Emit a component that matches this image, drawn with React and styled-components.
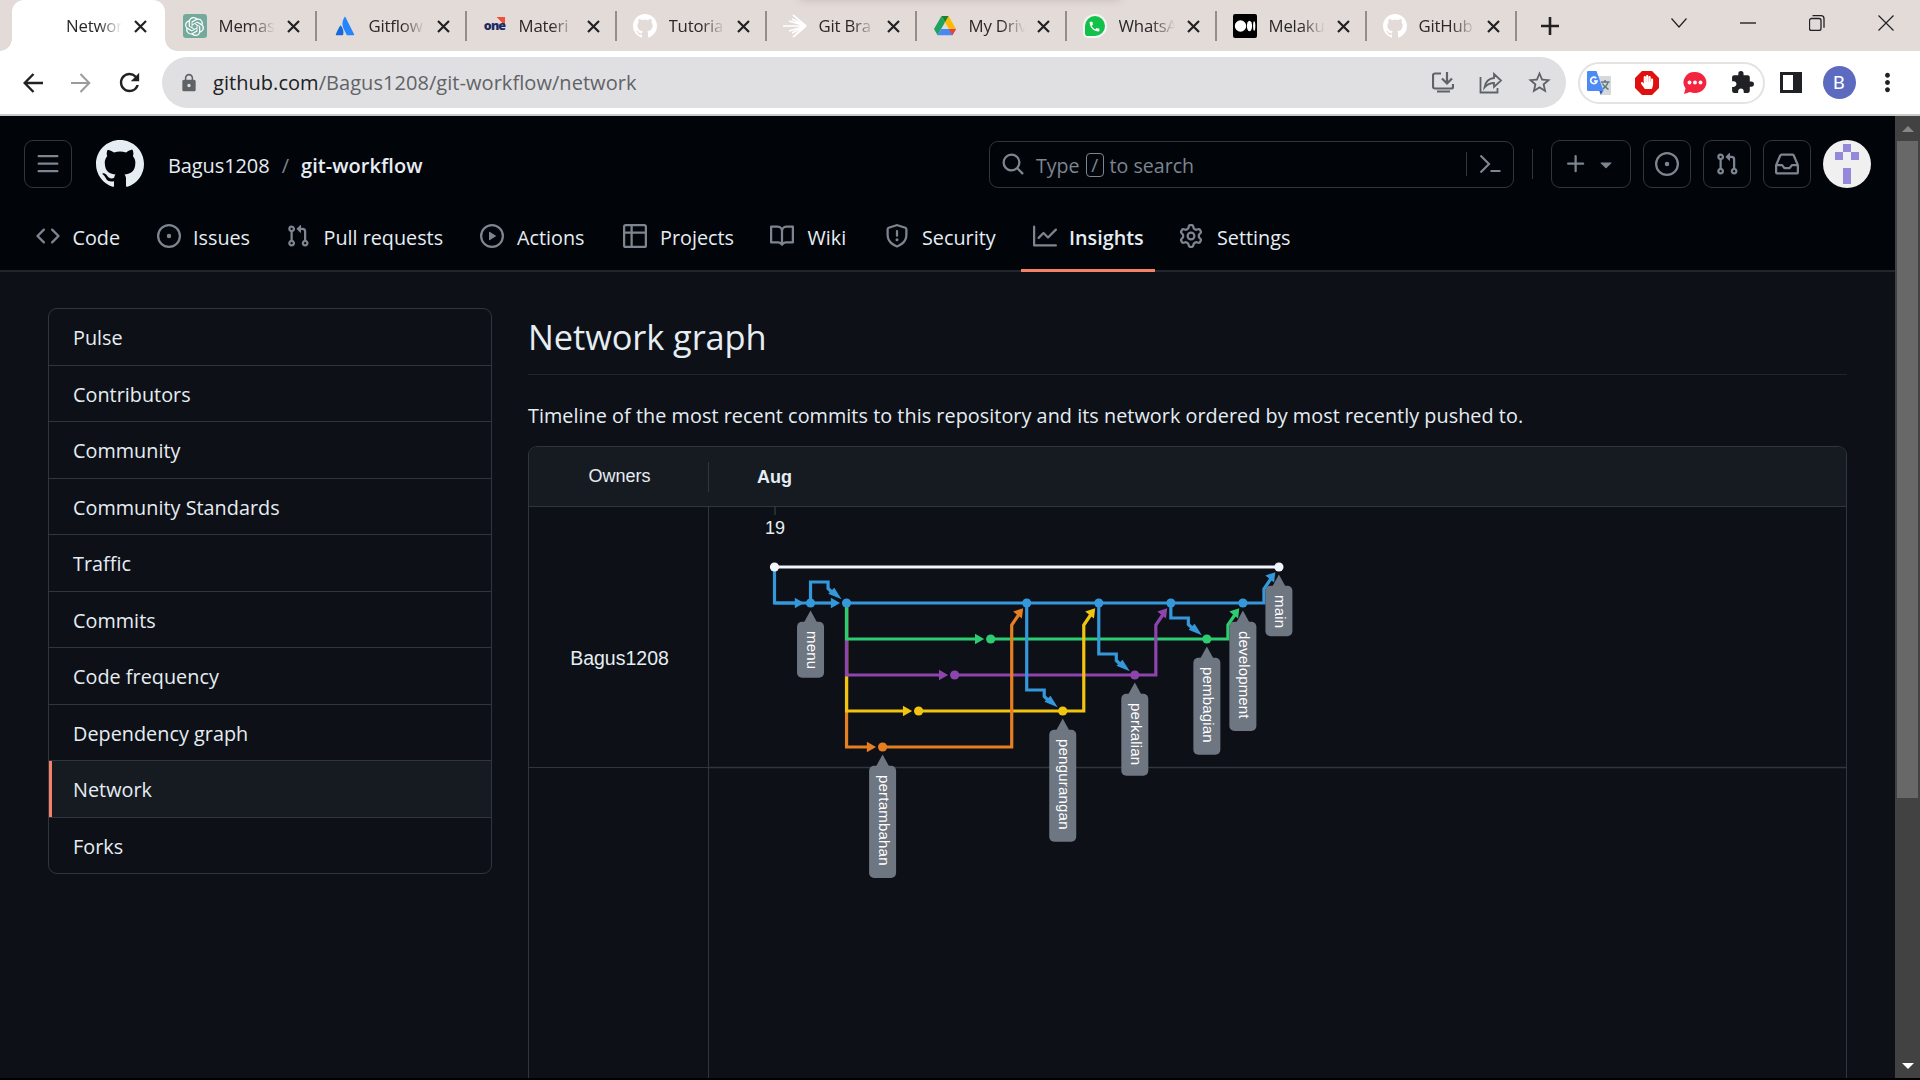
import React from "react";
import styled, { createGlobalStyle, css } from "styled-components";
import { MdRefresh, MdLock, MdStarBorder, MdExtension, MdMoreVert } from "react-icons/md";
import { SiOpenai } from "react-icons/si";
import { FaWhatsapp, FaHandPaper } from "react-icons/fa";

const UI = `"Open Sans", "Noto Sans", sans-serif`;
const ARIAL = `"Liberation Sans", Arial, sans-serif`;

const Global = createGlobalStyle`
  * { box-sizing: border-box; }
  html, body { margin: 0; padding: 0; background: #000; overflow: hidden; }
  svg { display: block; flex: none; }
`;

/* ---------- icons ---------- */

const PATHS = {
  github: "M8 0c4.42 0 8 3.58 8 8a8.013 8.013 0 0 1-5.45 7.59c-.4.08-.55-.17-.55-.38 0-.27.01-1.13.01-2.2 0-.75-.25-1.23-.54-1.48 1.78-.2 3.65-.88 3.65-3.95 0-.88-.31-1.59-.82-2.15.08-.2.36-1.02-.08-2.12 0 0-.67-.22-2.2.82-.64-.18-1.32-.27-2-.27-.68 0-1.36.09-2 .27-1.53-1.03-2.2-.82-2.2-.82-.44 1.1-.16 1.92-.08 2.12-.51.56-.82 1.28-.82 2.15 0 3.06 1.86 3.75 3.64 3.95-.23.2-.44.55-.51 1.07-.46.21-1.61.55-2.33-.66-.15-.24-.6-.83-1.23-.82-.67.01-.27.38.01.53.34.19.73.9.82 1.13.16.45.68 1.31 2.69.94 0 .67.01 1.3.01 1.49 0 .21-.15.45-.55.38A7.995 7.995 0 0 1 0 8c0-4.42 3.58-8 8-8Z",
  code: "m11.28 3.22 4.25 4.25a.75.75 0 0 1 0 1.06l-4.25 4.25a.749.749 0 0 1-1.275-.326.749.749 0 0 1 .215-.734L13.94 8l-3.72-3.72a.749.749 0 0 1 .326-1.275.749.749 0 0 1 .734.215Zm-6.56 0a.751.751 0 0 1 1.042.018.751.751 0 0 1 .018 1.042L2.06 8l3.72 3.72a.749.749 0 0 1-.326 1.275.749.749 0 0 1-.734-.215L.47 8.53a.75.75 0 0 1 0-1.06Z",
  issue: "M8 9.5a1.5 1.5 0 1 0 0-3 1.5 1.5 0 0 0 0 3ZM8 0a8 8 0 1 1 0 16A8 8 0 0 1 8 0ZM1.5 8a6.5 6.5 0 1 0 13 0 6.5 6.5 0 0 0-13 0Z",
  pull: "M1.5 3.25a2.25 2.25 0 1 1 3 2.122v5.256a2.251 2.251 0 1 1-1.5 0V5.372A2.25 2.25 0 0 1 1.5 3.25Zm5.677-.177L9.573.677A.25.25 0 0 1 10 .854V2.5h1A2.5 2.5 0 0 1 13.5 5v5.628a2.251 2.251 0 1 1-1.5 0V5a1 1 0 0 0-1-1h-1v1.646a.25.25 0 0 1-.427.177L7.177 3.427a.25.25 0 0 1 0-.354ZM3.75 2.5a.75.75 0 1 0 0 1.5.75.75 0 0 0 0-1.5Zm0 9.5a.75.75 0 1 0 0 1.5.75.75 0 0 0 0-1.5Zm8.25.75a.75.75 0 1 0 1.5 0 .75.75 0 0 0-1.5 0Z",
  play: "M8 0a8 8 0 1 1 0 16A8 8 0 0 1 8 0ZM1.5 8a6.5 6.5 0 1 0 13 0 6.5 6.5 0 0 0-13 0Zm4.879-2.773 4.264 2.559a.25.25 0 0 1 0 .428l-4.264 2.559A.25.25 0 0 1 6 10.559V5.442a.25.25 0 0 1 .379-.215Z",
  table: "M0 1.75C0 .784.784 0 1.75 0h12.5C15.216 0 16 .784 16 1.75v12.5A1.75 1.75 0 0 1 14.25 16H1.75A1.75 1.75 0 0 1 0 14.25ZM6.5 6.5v8h7.75a.25.25 0 0 0 .25-.25V6.5Zm8-1.5V1.75a.25.25 0 0 0-.25-.25H6.5V5Zm-13 1.5v7.75c0 .138.112.25.25.25H5v-8ZM5 5V1.5H1.75a.25.25 0 0 0-.25.25V5Z",
  book: "M0 1.75A.75.75 0 0 1 .75 1h4.253c1.227 0 2.317.59 3 1.501A3.743 3.743 0 0 1 11.006 1h4.245a.75.75 0 0 1 .75.75v10.5a.75.75 0 0 1-.75.75h-4.507a2.25 2.25 0 0 0-1.591.659l-.622.621a.75.75 0 0 1-1.06 0l-.622-.621A2.25 2.25 0 0 0 5.258 13H.75a.75.75 0 0 1-.75-.75Zm7.251 10.324.004-5.073-.002-2.253A2.25 2.25 0 0 0 5.003 2.5H1.5v9h3.757a3.75 3.75 0 0 1 1.994.574ZM8.755 4.75l-.004 7.322a3.752 3.752 0 0 1 1.992-.572H14.5v-9h-3.495a2.25 2.25 0 0 0-2.25 2.25Z",
  shield: "M7.467.133a1.748 1.748 0 0 1 1.066 0l5.25 1.68A1.75 1.75 0 0 1 15 3.48V7c0 1.566-.32 3.182-1.303 4.682-.983 1.498-2.585 2.813-5.032 3.855a1.697 1.697 0 0 1-1.33 0c-2.447-1.042-4.049-2.357-5.032-3.855C1.32 10.182 1 8.566 1 7V3.48a1.75 1.75 0 0 1 1.217-1.667Zm.61 1.429a.25.25 0 0 0-.153 0l-5.25 1.68a.25.25 0 0 0-.174.238V7c0 1.358.275 2.666 1.057 3.86.784 1.194 2.121 2.34 4.366 3.297a.196.196 0 0 0 .154 0c2.245-.956 3.582-2.104 4.366-3.298C13.225 9.666 13.5 8.36 13.5 7V3.48a.251.251 0 0 0-.174-.237l-5.25-1.68ZM8.75 4.75v3a.75.75 0 0 1-1.5 0v-3a.75.75 0 0 1 1.5 0ZM9 10.5a1 1 0 1 1-2 0 1 1 0 0 1 2 0Z",
  graph: "M1.5 1.75V13.5h13.75a.75.75 0 0 1 0 1.5H.75a.75.75 0 0 1-.75-.75V1.75a.75.75 0 0 1 1.5 0Zm14.28 2.53-5.25 5.25a.75.75 0 0 1-1.06 0L7 7.06 4.28 9.78a.751.751 0 0 1-1.042-.018.751.751 0 0 1-.018-1.042l3.25-3.25a.75.75 0 0 1 1.06 0L10 7.94l4.72-4.72a.751.751 0 0 1 1.042.018.751.751 0 0 1 .018 1.042Z",
  gear: "M8 0a8.2 8.2 0 0 1 .701.031C9.444.095 9.99.645 10.16 1.29l.288 1.107c.018.066.079.158.212.224.231.114.454.243.668.386.123.082.233.09.299.071l1.103-.303c.644-.176 1.392.021 1.82.63.27.385.506.792.704 1.218.315.675.111 1.422-.364 1.891l-.814.806c-.049.048-.098.147-.088.294.016.257.016.515 0 .772-.01.147.038.246.088.294l.814.806c.475.469.679 1.216.364 1.891a7.977 7.977 0 0 1-.704 1.217c-.428.61-1.176.807-1.82.63l-1.102-.302c-.067-.019-.177-.011-.3.071a5.909 5.909 0 0 1-.668.386c-.133.066-.194.158-.211.224l-.29 1.106c-.168.646-.715 1.196-1.458 1.26a8.006 8.006 0 0 1-1.402 0c-.743-.064-1.289-.614-1.458-1.26l-.289-1.106c-.018-.066-.079-.158-.212-.224a5.738 5.738 0 0 1-.668-.386c-.123-.082-.233-.09-.299-.071l-1.103.303c-.644.176-1.392-.021-1.82-.63a8.12 8.12 0 0 1-.704-1.218c-.315-.675-.111-1.422.363-1.891l.815-.806c.05-.048.098-.147.088-.294a6.214 6.214 0 0 1 0-.772c.01-.147-.038-.246-.088-.294l-.815-.806C.635 6.045.431 5.298.746 4.623a7.92 7.92 0 0 1 .704-1.217c.428-.61 1.176-.807 1.82-.63l1.102.302c.067.019.177.011.3-.071.214-.143.437-.272.668-.386.133-.066.194-.158.211-.224l.29-1.106C6.009.645 6.556.095 7.299.03 7.53.01 7.764 0 8 0Zm-.571 1.525c-.036.003-.108.036-.137.146l-.289 1.105c-.147.561-.549.967-.998 1.189-.173.086-.34.183-.5.29-.417.278-.97.423-1.529.27l-1.103-.303c-.109-.03-.175.016-.195.045-.22.312-.412.644-.573.99-.014.031-.021.11.059.19l.815.806c.411.406.562.957.53 1.456a4.709 4.709 0 0 0 0 .582c.032.499-.119 1.05-.53 1.456l-.815.806c-.081.08-.073.159-.059.19.162.346.353.677.573.989.02.03.085.076.195.046l1.102-.303c.56-.153 1.113-.008 1.53.27.161.107.328.204.501.29.447.222.85.629.997 1.189l.289 1.105c.029.109.101.143.137.146a6.6 6.6 0 0 0 1.142 0c.036-.003.108-.036.137-.146l.289-1.105c.147-.561.549-.967.998-1.189.173-.086.34-.183.5-.29.417-.278.97-.423 1.529-.27l1.103.303c.109.029.175-.016.195-.045.22-.313.411-.644.573-.99.014-.031.021-.11-.059-.19l-.815-.806c-.411-.406-.562-.957-.53-1.456a4.709 4.709 0 0 0 0-.582c-.032-.499.119-1.05.53-1.456l.815-.806c.081-.08.073-.159.059-.19a6.464 6.464 0 0 0-.573-.989c-.02-.03-.085-.076-.195-.046l-1.102.303c-.56.153-1.113.008-1.53-.27a4.44 4.44 0 0 0-.501-.29c-.447-.222-.85-.629-.997-1.189l-.289-1.105c-.029-.11-.101-.143-.137-.146a6.6 6.6 0 0 0-1.142 0ZM11 8a3 3 0 1 1-6 0 3 3 0 0 1 6 0ZM9.5 8a1.5 1.5 0 1 0-3.001.001A1.5 1.5 0 0 0 9.5 8Z",
  bars: "M1 2.75A.75.75 0 0 1 1.75 2h12.5a.75.75 0 0 1 0 1.5H1.75A.75.75 0 0 1 1 2.75Zm0 5A.75.75 0 0 1 1.75 7h12.5a.75.75 0 0 1 0 1.5H1.75A.75.75 0 0 1 1 7.75ZM1.75 12h12.5a.75.75 0 0 1 0 1.5H1.75a.75.75 0 0 1 0-1.5Z",
  search: "M10.68 11.74a6 6 0 0 1-7.922-8.982 6 6 0 0 1 8.982 7.922l3.04 3.04a.749.749 0 0 1-.326 1.275.749.749 0 0 1-.734-.215ZM11.5 7a4.499 4.499 0 1 0-8.997 0A4.499 4.499 0 0 0 11.5 7Z",
  plus: "M7.75 2a.75.75 0 0 1 .75.75V7h4.25a.75.75 0 0 1 0 1.5H8.5v4.25a.75.75 0 0 1-1.5 0V8.5H2.75a.75.75 0 0 1 0-1.5H7V2.75A.75.75 0 0 1 7.75 2Z",
  caret: "m4.427 7.427 3.396 3.396a.25.25 0 0 0 .354 0l3.396-3.396A.25.25 0 0 0 11.396 7H4.604a.25.25 0 0 0-.177.427Z",
  inbox: "M2.8 2.06A1.75 1.75 0 0 1 4.41 1h7.18c.7 0 1.333.417 1.61 1.06l2.74 6.395c.04.093.06.194.06.295v4.5A1.75 1.75 0 0 1 14.25 15H1.75A1.75 1.75 0 0 1 0 13.25v-4.5c0-.101.02-.202.06-.295Zm1.61.44a.25.25 0 0 0-.23.152L1.887 8H4.75a.75.75 0 0 1 .6.3L6.625 10h2.75l1.275-1.7a.75.75 0 0 1 .6-.3h2.863L11.82 2.652a.25.25 0 0 0-.23-.152Zm10.09 7h-2.875l-1.275 1.7a.75.75 0 0 1-.6.3h-3.5a.75.75 0 0 1-.6-.3L4.375 9.5H1.5v3.75c0 .138.112.25.25.25h12.5a.25.25 0 0 0 .25-.25Z",
};

const Octicon = ({ name, size = 24, color = "#7d8590" }) => (
  <svg width={size} height={size} viewBox="0 0 16 16" fill={color}>
    <path d={PATHS[name]} />
  </svg>
);

const Stroke = ({ w, h, d, color = "#202124", sw = 2 }) => (
  <svg width={w} height={h} viewBox={`0 0 ${w} ${h}`} fill="none" stroke={color} strokeWidth={sw}>
    <path d={d} />
  </svg>
);

/* ---------- browser chrome ---------- */

const Screen = styled.div`
  width: 1920px;
  height: 1080px;
  display: flex;
  flex-direction: column;
  background: #000;
  font-family: ${UI};
  overflow: hidden;
`;

const TabStrip = styled.div`
  position: relative;
  height: 51px;
  flex: none;
  display: flex;
  background: #e3dbd8;
  padding-left: 12px;
`;

const TopShade = styled.div`
  position: absolute;
  top: -7px;
  left: 800px;
  width: 320px;
  height: 6px;
  box-shadow: 0 0 9px rgba(70, 50, 50, 0.25);
`;

const Tab = styled.div`
  position: relative;
  flex: none;
  display: flex;
  align-items: center;
  width: 150px;
  height: 51px;
  padding: 1px 0 0 16px;
  ${(p) =>
    p.$active &&
    css`
      width: 153px;
      margin-right: 1.5px;
      padding-left: 18px;
      background: #fff;
      border-radius: 12px 12px 0 0;
      &::before,
      &::after {
        content: "";
        position: absolute;
        bottom: 0;
        width: 12px;
        height: 12px;
      }
      &::before {
        left: -12px;
        background: radial-gradient(circle at 0 0, transparent 11.5px, #fff 12px);
      }
      &::after {
        right: -12px;
        background: radial-gradient(circle at 100% 0, transparent 11.5px, #fff 12px);
      }
    `}
`;

const TabIcon = styled.div`
  width: 24px;
  height: 24px;
  display: grid;
  place-items: center;
  margin-right: 12px;
  border-radius: ${(p) => p.$radius || 0}px;
  background: ${(p) => p.$bg || "transparent"};
`;

const TabTitle = styled.div`
  width: 56px;
  overflow: hidden;
  white-space: nowrap;
  font-size: 16.8px;
  line-height: 26px;
  margin-top: -1px;
  letter-spacing: -0.2px;
  color: #2a2727;
  mask-image: linear-gradient(90deg, #000 58%, transparent 100%);
`;

const TabClose = styled.div`
  margin-left: 12px;
`;

const TabRule = styled.div`
  width: 2px;
  height: 30px;
  background: #958d8a;
  margin-left: auto;
  margin-right: -0.5px;
`;

const NewTab = styled.div`
  display: grid;
  place-items: center;
  width: 66px;
`;

const WindowControls = styled.div`
  display: flex;
  align-items: center;
  height: 45px;
  margin-left: auto;
  & > * {
    width: 69px;
    display: grid;
    place-items: center;
  }
`;

const Toolbar = styled.div`
  height: 65px;
  flex: none;
  display: flex;
  align-items: center;
  background: #fff;
  border-bottom: 2px solid #c9cbcb;
  padding: 0 9px;
`;

const ToolButton = styled.div`
  width: 48px;
  display: grid;
  place-items: center;
`;

const AddressBar = styled.div`
  width: 1404px;
  height: 51px;
  margin-left: 9px;
  display: flex;
  align-items: center;
  border-radius: 26px;
  background: #e0e0e2;
  padding: 0 3px 0 17px;
`;

const Url = styled.div`
  flex: 1;
  margin-left: 14px;
  font-size: 20px;
  letter-spacing: 0.05px;
  color: #606367;
  span {
    color: #202124;
  }
`;

const Extensions = styled.div`
  display: flex;
  align-items: center;
  width: 187px;
  height: 42px;
  margin: 0 2px 0 12px;
  padding-right: 2px;
  border: 2px solid #e3e3e4;
  border-radius: 21px;
  justify-content: center;
  & > * {
    width: 48px;
    flex: none;
    display: grid;
    place-items: center;
  }
`;

const Profile = styled.div`
  width: 33px;
  height: 33px;
  border-radius: 50%;
  background: #5c6bc0;
  color: #fff;
  display: grid;
  place-items: center;
  font-family: Roboto, ${UI};
  font-size: 19px;
  line-height: 34px;
`;

/* ---------- page ---------- */

const Viewport = styled.div`
  display: flex;
  height: 962px;
  flex: none;
`;

const Page = styled.div`
  width: 1895px;
  height: 962px;
  overflow: hidden;
  background: #0d1117;
  color: #e6edf3;
`;

const Scrollbar = styled.div`
  width: 25px;
  display: flex;
  flex-direction: column;
  align-items: center;
  background: #424242;
`;

const ScrollArrow = styled.div`
  height: 25px;
  display: grid;
  place-items: center;
`;

const Thumb = styled.div`
  width: 21px;
  height: 657px;
  background: #686868;
  margin-bottom: auto;
`;

const Header = styled.header`
  height: 156px;
  background: #010409;
  border-bottom: 2px solid #21262d;
`;

const HeaderTop = styled.div`
  display: flex;
  align-items: center;
  height: 96px;
  padding: 0 24px;
`;

const IconButton = styled.div`
  width: ${(p) => p.$w || 48}px;
  height: 48px;
  display: flex;
  align-items: center;
  justify-content: center;
  border: 1px solid #30363d;
  border-radius: 9px;
  margin-left: ${(p) => p.$ml ?? 12}px;
  gap: 6px;
`;

const Logo = styled.div`
  margin: 0 24px;
`;

const Crumbs = styled.div`
  display: flex;
  font-size: 20px;
  line-height: 30px;
  padding-top: 3px;
  white-space: pre;
  span {
    width: 32px;
    padding-left: 1px;
    text-align: center;
    color: #7d8590;
  }
  b {
    font-weight: 600;
    letter-spacing: 0.05px;
  }
`;

const Owner = styled.div`
  width: 101px;
  letter-spacing: -0.1px;
`;

const Search = styled.div`
  display: flex;
  align-items: center;
  width: 525px;
  height: 47px;
  margin-left: auto;
  border: 1px solid #30363d;
  border-radius: 9px;
  padding: 0 11px 0 11px;
  font-size: 19.6px;
  color: #7d8590;
`;

const SearchHint = styled.div`
  display: flex;
  align-items: center;
  flex: 1;
  padding-left: 11px;
  padding-top: 2px;
  gap: 6px;
`;

const Slash = styled.span`
  width: 18px;
  height: 24px;
  display: grid;
  place-items: center;
  border: 1px solid #7d8590;
  border-radius: 4px;
  font-size: 19px;
  line-height: 22px;
`;

const Divider = styled.div`
  width: 1px;
  height: ${(p) => p.$h}px;
  background: #30363d;
  margin: ${(p) => p.$m};
`;

const Avatar = styled.div`
  margin-left: 12px;
  width: 48px;
  height: 48px;
  border-radius: 50%;
  background: #f0f0f0;
  overflow: hidden;
`;

const Nav = styled.nav`
  display: flex;
  height: 60px;
  padding-left: 24px;
`;

const NavItem = styled.div`
  position: relative;
  display: flex;
  width: ${(p) => p.$w}px;
  height: 60px;
  padding: 0 12px;
  gap: ${(p) => p.$gap}px;
  font-size: 19.8px;
  line-height: 26px;
  white-space: nowrap;
  margin-right: 12px;
  font-weight: ${(p) => (p.$active ? 600 : 400)};
  svg { margin-top: 12px; }
  span { margin-top: 13px; }
  ${(p) =>
    p.$active &&
    css`
      &::after {
        content: "";
        position: absolute;
        left: 0;
        right: 0;
        bottom: 0;
        height: 3px;
        background: #f78166;
      }
    `}
`;

const Body = styled.div`
  display: flex;
  padding: 36px 48px 0;
  gap: 36px;
`;

const Side = styled.div`
  width: 444px;
  height: 566px;
  flex: none;
  border: 1px solid #30363d;
  border-radius: 9px;
  overflow: hidden;
`;

const SideItem = styled.div`
  height: 56.5px;
  display: flex;
  align-items: center;
  padding: 1.7px 0 0 24px;
  font-size: 19.8px;
  letter-spacing: 0.03px;
  border-bottom: 1px solid #30363d;
  &:last-child { border-bottom: 0; }
  ${(p) =>
    p.$active &&
    css`
      background: #161b22;
      box-shadow: inset 3px 0 #f78166;
    `}
`;

const Main = styled.main`
  width: 1319px;
`;

const Title = styled.h2`
  margin: 0;
  height: 67px;
  border-bottom: 1px solid #21262d;
  font-weight: 400;
  font-size: 34.4px;
  line-height: 58px;
  letter-spacing: -0.1px;
`;

const Lead = styled.p`
  margin: 27px 0 16px;
  height: 28px;
  font-size: 19.8px;
  letter-spacing: 0.05px;
  line-height: 28px;
  white-space: nowrap;
`;

const Board = styled.div`
  border: 1px solid #30363d;
  border-bottom: 0;
  border-radius: 9px 9px 0 0;
  overflow: hidden;
  font-family: ${ARIAL};
`;

const BoardHead = styled.div`
  display: flex;
  align-items: center;
  height: 60px;
  background: #161b22;
  border-bottom: 1px solid #30363d;
  font-size: 18px;
`;

const HeadOwners = styled.div`
  width: 180px;
  height: 30px;
  line-height: 29px;
  padding-left: 2px;
  text-align: center;
  border-right: 1px solid #30363d;
`;

const Month = styled.div`
  padding: 2px 0 0 48px;
  font-weight: 700;
`;

const BoardBody = styled.div`
  display: flex;
  height: 571px;
`;

const OwnerCol = styled.div`
  width: 180px;
  border-right: 1px solid #30363d;
`;

const OwnerCell = styled.div`
  height: 261px;
  display: grid;
  place-items: center;
  padding: 43px 0 0 2px;
  font-size: 19.5px;
  border-bottom: 1px solid #30363d;
`;

const GraphSvg = styled.svg`
  text {
    font-family: ${ARIAL};
  }
`;

/* ---------- network graph ---------- */

const COLORS = { white: "#f0f6fc", blue: "#3498db", green: "#2ecc71", purple: "#8e44ad", yellow: "#f1c40f", orange: "#e67e22" };
const cx = (col) => 774.5 + col * 36.03;
const cy = (row) => 567 + row * 36;

const Line = ({ d, c }) => <path d={d} fill="none" stroke={COLORS[c]} strokeWidth="3.2" />;

const Forward = ({ from, fromRow, to, row, c }) => (
  <g>
    <Line c={c} d={`M${cx(from)} ${cy(fromRow)}V${cy(row)}H${cx(to) - 10}`} />
    <path fill={COLORS[c]} d={`M${cx(to) - 6.5} ${cy(row)}l-9.2 -5.2v10.4z`} />
  </g>
);

const Branch = ({ from, fromRow = 1, to, row, c = "blue" }) => (
  <g>
    <Line c={c} d={`M${cx(from)} ${cy(fromRow)}V${cy(row) - 21}H${cx(to) - 18.5}V${cy(row) - 14.5}L${cx(to) - 12} ${cy(row) - 8.5}`} />
    <path fill={COLORS[c]} d={`M${cx(to) - 5} ${cy(row) - 3.7}l-13.3 -5.6l6 -6z`} />
  </g>
);

const Merge = ({ from, fromRow, to, row, c }) => (
  <g>
    <Line c={c} d={`M${cx(from)} ${cy(fromRow)}H${cx(to) - 15}V${cy(row) + 22}L${cx(to) - 7.5} ${cy(row) + 11}`} />
    <path fill={COLORS[c]} d={`M${cx(to) - 3.6} ${cy(row) + 5.3}l-10 3.2l8.8 7z`} />
  </g>
);

const Dot = ({ col, row, c }) => <circle cx={cx(col)} cy={cy(row)} r="4.6" fill={COLORS[c]} />;

const Label = ({ col, row, text, len, h }) => {
  const x = cx(col);
  const y = cy(row);
  return (
    <g>
      <path fill="#6e7681" d={`M${x} ${y + 7.5}l6.6 12h-13.2z`} />
      <rect x={x - 13.5} y={y + 18.7} width="27" height={h} rx="5" fill="#6e7681" />
      <text transform={`translate(${x - 4} ${y + 28}) rotate(90)`} fontSize="15" fill="#fff" textLength={len}>
        {text}
      </text>
    </g>
  );
};

const DOTS = [
  [1, 1, "blue"], [2, 1, "blue"], [7, 1, "blue"], [9, 1, "blue"], [11, 1, "blue"], [13, 1, "blue"],
  [6, 2, "green"], [12, 2, "green"], [5, 3, "purple"], [10, 3, "purple"],
  [4, 4, "yellow"], [8, 4, "yellow"], [3, 5, "orange"], [0, 0, "white"], [14, 0, "white"],
];

const LABELS = [
  [14, 0, "main", 33, 50.5], [13, 1, "development", 87.5, 109.3], [1, 1, "menu", 38, 56], [12, 2, "pembagian", 75.5, 97],
  [10, 3, "perkalian", 62, 82], [8, 4, "pengurangan", 90.5, 112], [3, 5, "pertambahan", 90.5, 112.3],
];

const Network = () => (
  <GraphSvg width="1137" height="571" viewBox="709 507 1137 571">
    <path d="M709 767.5H1847" stroke="#30363d" strokeWidth="1.4" />
    <path d="M775 507v8" stroke="#30363d" strokeWidth="1.5" />
    <text x="775" y="534" fontSize="18" fill="#e6edf3" textAnchor="middle">19</text>
    <Line c="white" d={`M${cx(0)} ${cy(0)}H${cx(14)}`} />
    <Forward c="blue" from={0} fromRow={0} to={1} row={1} />
    <Line c="blue" d={`M${cx(0)} ${cy(1)}H${cx(1)}`} />
    <Forward c="blue" from={1} fromRow={1} to={2} row={1} />
    <Branch from={1} to={2} row={1} />
    <Line c="blue" d={`M${cx(2)} ${cy(1)}H${cx(13)}`} />
    <Forward c="orange" from={2} fromRow={1} to={3} row={5} />
    <Forward c="yellow" from={2} fromRow={1} to={4} row={4} />
    <Line c="yellow" d={`M${cx(4)} ${cy(4)}H${cx(8)}`} />
    <Forward c="purple" from={2} fromRow={1} to={5} row={3} />
    <Line c="purple" d={`M${cx(5)} ${cy(3)}H${cx(10)}`} />
    <Forward c="green" from={2} fromRow={1} to={6} row={2} />
    <Line c="green" d={`M${cx(6)} ${cy(2)}H${cx(12)}`} />
    <Branch from={7} to={8} row={4} />
    <Branch from={9} to={10} row={3} />
    <Branch from={11} to={12} row={2} />
    <Merge c="orange" from={3} fromRow={5} to={7} row={1} />
    <Merge c="yellow" from={8} fromRow={4} to={9} row={1} />
    <Merge c="purple" from={10} fromRow={3} to={11} row={1} />
    <Merge c="green" from={12} fromRow={2} to={13} row={1} />
    <Merge c="blue" from={13} fromRow={1} to={14} row={0} />
    {DOTS.map(([col, row, c]) => (
      <Dot key={`${col}-${row}`} col={col} row={row} c={c} />
    ))}
    {LABELS.map(([col, row, text, len, h]) => (
      <Label key={text} col={col} row={row} text={text} len={len} h={h} />
    ))}
  </GraphSvg>
);

/* ---------- favicons ---------- */

const Atlassian = () => (
  <svg width="20" height="20" viewBox="0 0 20 20">
    <path d="M5.5 9.2C3.8 11.5 2 15 .8 18.4c-.1.5.1.8.6.8h6.2c.3 0 .5-.2.6-.5C9 15.5 8 11.5 5.5 9.2z" fill="#1868db" />
    <path d="M9.6 1c-3 4.7-2.5 8.700-.6 12.5l2.6 5.2c.1.3.4.5.7.5h6.3c.5 0 .7-.4.5-.9L10.4 1c-.2-.4-.6-.4-.8 0z" fill="#2684ff" />
  </svg>
);

const OneWord = styled.div`
  font: 800 12.500px/20px "Open Sans", sans-serif;
  letter-spacing: -0.9px;
  color: #1b2a63;
  background: linear-gradient(225deg, #f0503c 0 6px, transparent 6px) no-repeat right 0 top 1px / 8px 8px;
`;

const BurstArrow = () => (
  <Stroke w={24} h={24} color="#fff" sw={1.7} d="M0 12H20M23 12L10 1M23 12L9 5M23 12L6 7M23 12L6 17M23 12L9 19M23 12L10 23" />
);

const Drive = () => (
  <svg width="22" height="20" viewBox="0 0 22 20">
    <path d="M7.5 0 0 13l3.6 6.3L11 6.3z" fill="#1ea362" />
    <path d="M7.5 0h7L22 13h-7.2z" fill="#ffba00" />
    <path d="M7.3 13H22l-3.6 6.3H3.6z" fill="#4688f4" />
    <path d="M7.5 0h7L11 6.3z" fill="#188038" />
    <path d="M14.8 13H22l-3.6 6.3z" fill="#ea4335" />
  </svg>
);

const WhatsIcon = styled.div`
  width: 24px;
  height: 24px;
  border-radius: 50% 50% 50% 20%;
  border: 2px solid #f5f5f5;
  background: #12c14a;
  display: grid;
  place-items: center;
`;

const Handset = () => (
  <svg width="13" height="13" viewBox="0 0 24 24" fill="#fff">
    <path d="M6.6 10.800c1.400 2.800 3.800 5.100 6.600 6.600l2.200-2.200c.3-.3.7-.4 1-.2 1.100.4 2.300.6 3.600.6.6 0 1 .4 1 1V20c0 .6-.4 1-1 1C10.600 21 3 13.400 3 4c0-.6.4-1 1-1h3.500c.6 0 1 .4 1 1 0 1.300.2 2.500.6 3.600.1.3 0 .7-.2 1z" />
  </svg>
);

const Medium = () => (
  <svg width="22" height="12" viewBox="0 0 22 12" fill="#fff">
    <ellipse cx="6.5" cy="6" rx="5.7" ry="5.7" />
    <ellipse cx="15.5" cy="6" rx="2.6" ry="5.3" />
    <ellipse cx="20.2" cy="6" rx="1.1" ry="4.8" />
  </svg>
);

const TranslateIcon = () => (
  <svg width="24" height="24" viewBox="0 0 24 24">
    <path d="M9 5h14a1 1 0 0 1 1 1v17a1 1 0 0 1-1 1H14z" fill="#d5d9dc" />
    <path d="M14 11h8.5M18 9v2M21 11c-.8 3-3 5.500-5.500 7M15.500 12.500c1.200 2.600 3.400 4.600 6 6" stroke="#5f7a80" strokeWidth="1.5" fill="none" />
    <path d="M12 19h4.500L13.800 24z" fill="#3556b4" />
    <path d="M1 0h8.500L16.500 20H1a1 1 0 0 1-1-1V1a1 1 0 0 1 1-1z" fill="#4c8bf5" />
    <path d="M9.300 7.300A3.200 3.200 0 1 0 10 10H7" stroke="#fff" strokeWidth="1.7" fill="none" />
  </svg>
);

const AdBlockIcon = () => (
  <svg width="24" height="24" viewBox="0 0 24 24">
    <path d="M7 0h10l7 7v10l-7 7H7l-7-7V7z" fill="#e01010" />
    <g transform="translate(5 4)"><FaHandPaper size={14} color="#fff" /></g>
  </svg>
);

const ChatIcon = () => (
  <svg width="24" height="24" viewBox="0 0 24 24">
    <path d="M12 1a11.5 10.5 0 1 1-5 20L1 23l1.5-5.5A11 10.5 0 0 1 12 1z" fill="#f4243f" />
    <circle cx="6.5" cy="11.5" r="1.9" fill="#fff" />
    <circle cx="12" cy="11.5" r="1.9" fill="#fff" />
    <circle cx="17.5" cy="11.5" r="1.9" fill="#fff" />
  </svg>
);

const TABS = [
  { title: "Memas", icon: <SiOpenai size={19} color="#fff" />, bg: "#74aa9c", radius: 3 },
  { title: "Gitflow", icon: <Atlassian /> },
  { title: "Materi", icon: <OneWord>one</OneWord> },
  { title: "Tutoria", icon: <Octicon name="github" color="#fff" /> },
  { title: "Git Bra", icon: <BurstArrow /> },
  { title: "My Driv", icon: <Drive /> },
  { title: "WhatsA", icon: <WhatsIcon><Handset /></WhatsIcon> },
  { title: "Melaku", icon: <Medium />, bg: "#000", radius: 2 },
  { title: "GitHub", icon: <Octicon name="github" color="#fff" /> },
];

const CloseGlyph = () => <Stroke w={13} h={13} sw={2.2} d="M1 1L12 12M12 1L1 12" />;

/* icon, label, item width, gap between icon and label */
const NAV = [
  { icon: "code", label: "Code", w: 109, gap: 12.5 },
  { icon: "issue", label: "Issues", w: 116.5, gap: 12 },
  { icon: "pull", label: "Pull requests", w: 182.5, gap: 14 },
  { icon: "play", label: "Actions", w: 131, gap: 13 },
  { icon: "table", label: "Projects", w: 134.5, gap: 13 },
  { icon: "book", label: "Wiki", w: 103, gap: 14 },
  { icon: "shield", label: "Security", w: 136.5, gap: 13.5 },
  { icon: "graph", label: "Insights", w: 134, gap: 12, active: true },
  { icon: "gear", label: "Settings", w: 136, gap: 14 },
];

const SIDE = ["Pulse", "Contributors", "Community", "Community Standards", "Traffic", "Commits", "Code frequency", "Dependency graph", "Network", "Forks"];

export default function App() {
  return (
    <Screen>
      <Global />
      <TabStrip>
        <TopShade />
        <Tab $active>
          <TabIcon />
          <TabTitle>Networ</TabTitle>
          <TabClose><CloseGlyph /></TabClose>
        </Tab>
        {TABS.map((t) => (
          <Tab key={t.title}>
            <TabIcon $bg={t.bg} $radius={t.radius}>{t.icon}</TabIcon>
            <TabTitle>{t.title}</TabTitle>
            <TabClose><CloseGlyph /></TabClose>
            <TabRule />
          </Tab>
        ))}
        <NewTab><Stroke w={18} h={18} sw={2.6} d="M9 0V18M0 9H18" /></NewTab>
        <WindowControls>
          <div><Stroke w={16} h={10} sw={1.2} d="M.5 .5L8 9L15.5 .5" /></div>
          <div><Stroke w={16} h={2} sw={1.4} d="M0 1H16" /></div>
          <div><Stroke w={16} h={16} sw={1.3} d="M2.5 3.5h7.5a2 2 0 0 1 2 2v8a2 2 0 0 1-2 2H2.5a2 2 0 0 1-2-2v-8a2 2 0 0 1 2-2zM3.5 .7h8.500a3 3 0 0 1 3 3v9" /></div>
          <div><Stroke w={16} h={16} sw={1.2} d="M.5 .5L15.5 15.5M15.5 .5L.5 15.5" /></div>
        </WindowControls>
      </TabStrip>

      <Toolbar>
        <ToolButton><Stroke w={20} h={20} sw={2.4} d="M20 10H2M10.5 1L1.7 10L10.5 19" /></ToolButton>
        <ToolButton><Stroke w={20} h={20} sw={2} color="#9b9b9b" d="M0 10H18M9.5 1L18.3 10L9.5 19" /></ToolButton>
        <ToolButton><MdRefresh size={29} color="#202124" /></ToolButton>
        <AddressBar>
          <MdLock size={20} color="#5f6368" />
          <Url><span>github.com</span>/Bagus1208/git-workflow/network</Url>
          <ToolButton><Stroke w={22} h={22} sw={2.2} color="#5f6368" d="M9 1.5H3a2 2 0 0 0-2 2v11a2 2 0 0 0 2 2h16.5a1.5 1.5 0 0 0 1.5-1.5v-3M15 0V11M10 6.5L15 11.5L20 6.5M5 19.500H18" /></ToolButton>
          <ToolButton><Stroke w={24} h={22} sw={1.8} color="#5f6368" d="M1.5 5V20.5H18.5V16M15 2L22 8.5L15 15V11C10.5 11 8 12.5 5.5 15.5C6.5 9.5 9.5 6.5 15 6Z" /></ToolButton>
          <ToolButton><MdStarBorder size={27} color="#5f6368" /></ToolButton>
        </AddressBar>
        <Extensions>
          <div><TranslateIcon /></div>
          <div><AdBlockIcon /></div>
          <div><ChatIcon /></div>
          <div><MdExtension size={25} color="#202124" /></div>
        </Extensions>
        <ToolButton>
          <svg width="22" height="21" viewBox="0 0 22 21"><path fillRule="evenodd" d="M0 0h22v21H0zM3 3v15h10V3z" fill="#202124" /></svg>
        </ToolButton>
        <ToolButton><Profile>B</Profile></ToolButton>
        <ToolButton><MdMoreVert size={29} color="#202124" /></ToolButton>
      </Toolbar>

      <Viewport>
        <Page>
          <Header>
            <HeaderTop>
              <IconButton $ml={0}><Octicon name="bars" /></IconButton>
              <Logo><Octicon name="github" size={48} color="#e6edf3" /></Logo>
              <Crumbs>
                <Owner>Bagus1208</Owner>
                <span>/</span>
                <b>git-workflow</b>
              </Crumbs>
              <Search>
                <Octicon name="search" />
                <SearchHint>
                  Type <Slash>/</Slash> to search
                </SearchHint>
                <Divider $h={24} $m="0 11px 0 0" />
                <Stroke w={24} h={24} sw={2.2} color="#7d8590" d="M2.5 3.5L11 12L2.5 20.5M12.5 19H22.5" />
              </Search>
              <Divider $h={30} $m="0 18px" />
              <IconButton $w={80} $ml={0}>
                <Octicon name="plus" />
                <Octicon name="caret" />
              </IconButton>
              <IconButton><Octicon name="issue" /></IconButton>
              <IconButton><Octicon name="pull" /></IconButton>
              <IconButton><Octicon name="inbox" /></IconButton>
              <Avatar>
                <svg width="48" height="48" viewBox="0 0 48 48" fill="#9388d9">
                  <path d="M20 4h8v8h-8zM12 12h8v8h-8zM28 12h8v8h-8zM20 28h8v16h-8z" />
                </svg>
              </Avatar>
            </HeaderTop>
            <Nav>
              {NAV.map((n) => (
                <NavItem key={n.label} $w={n.w} $gap={n.gap} $active={n.active}>
                  <Octicon name={n.icon} />
                  <span>{n.label}</span>
                </NavItem>
              ))}
            </Nav>
          </Header>
          <Body>
            <Side>
              {SIDE.map((s) => (
                <SideItem key={s} $active={s === "Network"}>{s}</SideItem>
              ))}
            </Side>
            <Main>
              <Title>Network graph</Title>
              <Lead>Timeline of the most recent commits to this repository and its network ordered by most recently pushed to.</Lead>
              <Board>
                <BoardHead>
                  <HeadOwners>Owners</HeadOwners>
                  <Month>Aug</Month>
                </BoardHead>
                <BoardBody>
                  <OwnerCol><OwnerCell>Bagus1208</OwnerCell></OwnerCol>
                  <Network />
                </BoardBody>
              </Board>
            </Main>
          </Body>
        </Page>
        <Scrollbar>
          <ScrollArrow><svg width="12" height="6" viewBox="0 0 12 6"><path d="M6 0l6 6H0z" fill="#868686" /></svg></ScrollArrow>
          <Thumb />
          <ScrollArrow><svg width="12" height="6" viewBox="0 0 12 6"><path d="M0 0h12L6 6z" fill="#fff" /></svg></ScrollArrow>
        </Scrollbar>
      </Viewport>
    </Screen>
  );
}
